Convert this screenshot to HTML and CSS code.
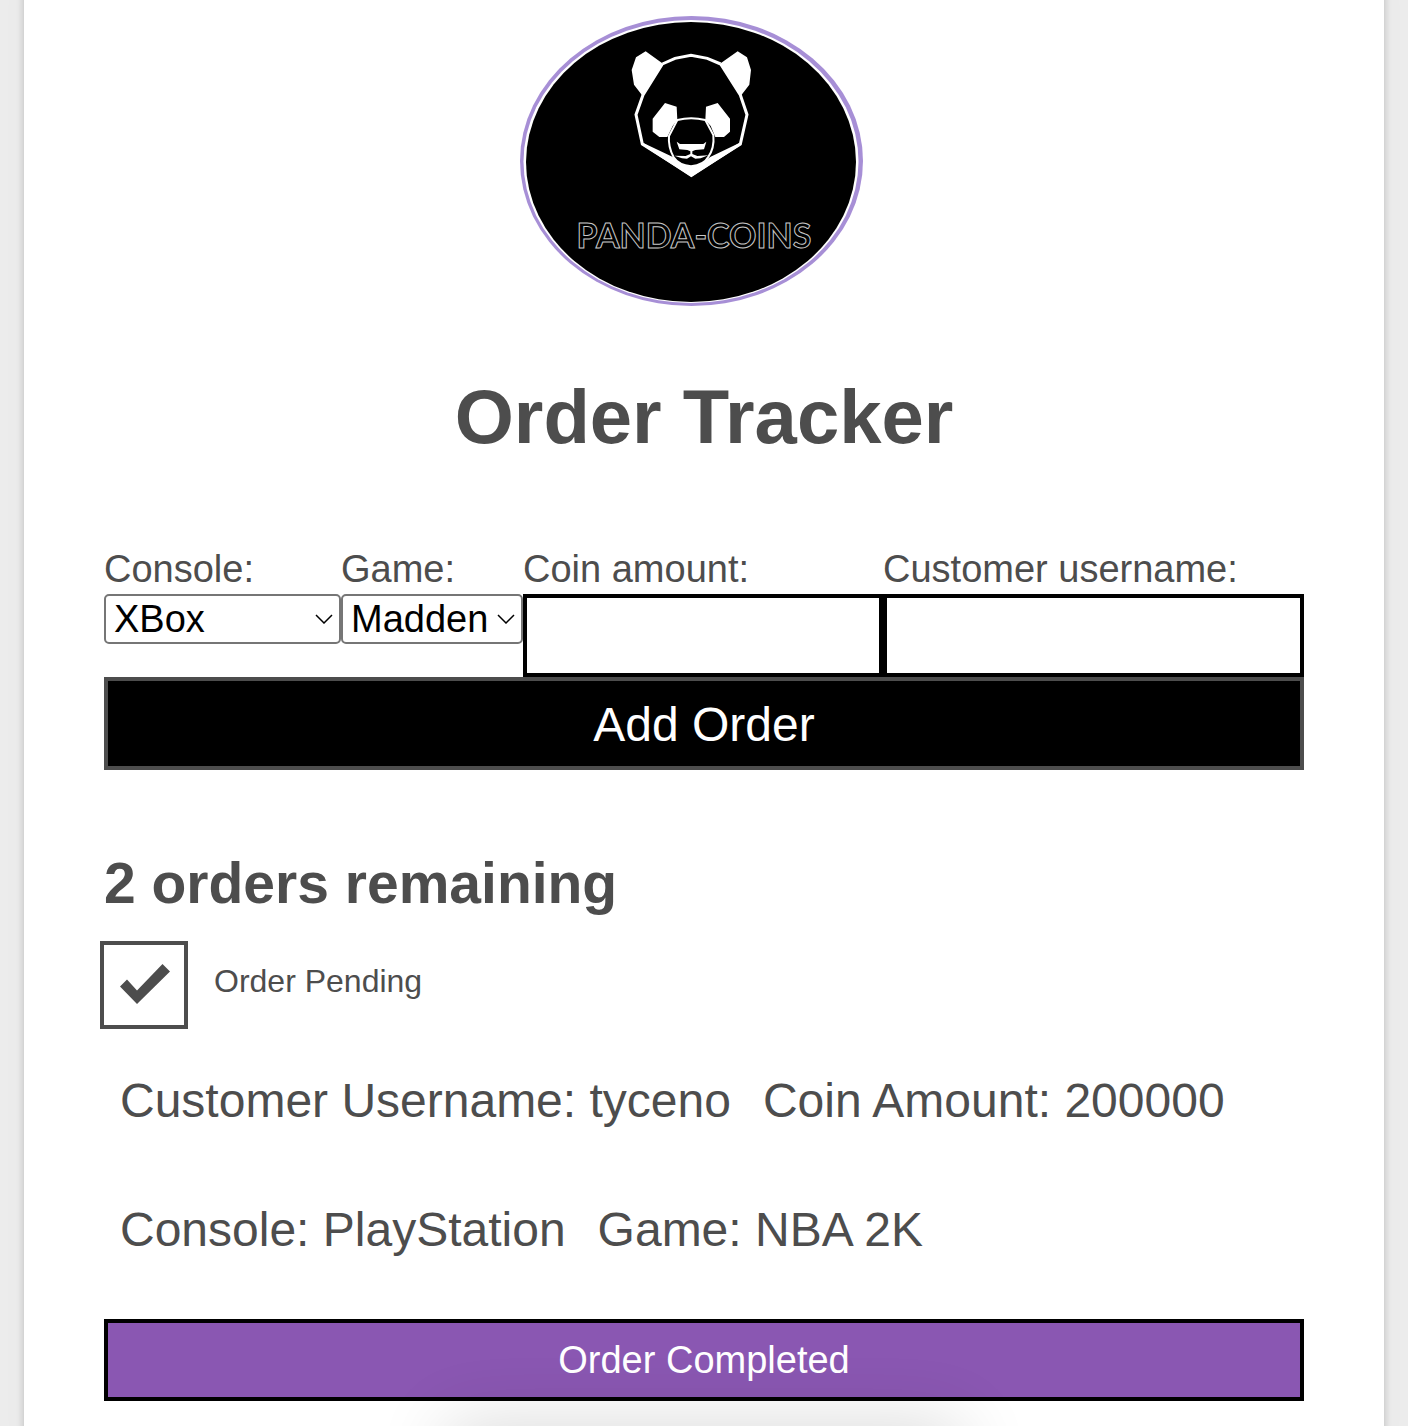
FILE: index.html
```html
<!DOCTYPE html>
<html lang="en">
<head>
<meta charset="utf-8">
<meta name="viewport" content="width=device-width, initial-scale=1">
<title>Order Tracker</title>
<link rel="stylesheet" href="styles.css">
</head>
<body>
<div class="page">
  <main class="card">
    <svg class="logo" viewBox="0 0 368 290" role="img" aria-label="Panda-Coins">
      <ellipse cx="171.5" cy="145" rx="171.5" ry="145" fill="#a78fd6"/>
      <ellipse cx="171" cy="145.5" rx="167.5" ry="141.5" fill="#fff"/>
      <ellipse cx="171" cy="146" rx="165" ry="140" fill="#000"/>
      <g transform="translate(100 24) scale(.33333)" fill="#fff">
        <path d="M77 34 127 70 68 168 42 134 35 90 48 52ZM353 34 302 70 362 168 388 134 393 90 381 52Z"/>
        <path d="M135 189 170 200 172 240 158 258 142 291 118 291 98 275 98 236ZM293 189 258 200 256 240 272 258 286 291 312 291 330 275 330 236Z"/>
        <path d="M127 72 165 55 213 46 262 55 302 72M127 72 69 165 48 224 67 312 214 405 361 312 381 224 361 165 302 72" fill="none" stroke="#fff" stroke-width="9"/>
        <path d="M65 314 70 309 157 350 188 374 213 379 238 374 272 350 358 309 364 314 214 412Z"/>
        <path d="M172 240Q213 230 256 240L280 285Q284 325 264 352 252 375 213 379 176 375 161 352 144 320 147 288Z" fill="#000" stroke="#fff" stroke-width="6"/>
        <path d="M170 305 180 312H250L259 305 252 328 226 330 217 334V342L232 348 265 346 242 355 226 356 213 349 201 356 186 355 163 347 197 348 211 342V334L202 330 178 328Z"/>
      </g>
      <text class="logo-name" x="174" y="232" text-anchor="middle">PANDA-COINS</text>
    </svg>

    <h1 class="title">Order Tracker</h1>

    <form class="order-form">
      <div class="field">
        <label for="console">Console:</label>
        <div class="picker">
          <select id="console"><option>XBox</option><option>PlayStation</option></select>
          <svg class="chevron" viewBox="0 0 18 10" aria-hidden="true"><path d="M1 1 9 9 17 1"/></svg>
        </div>
      </div>
      <div class="field">
        <label for="game">Game:</label>
        <div class="picker">
          <select id="game"><option>Madden</option><option>NBA 2K</option></select>
          <svg class="chevron" viewBox="0 0 18 10" aria-hidden="true"><path d="M1 1 9 9 17 1"/></svg>
        </div>
      </div>
      <div class="field">
        <label for="coins">Coin amount:</label>
        <input class="text-input" id="coins" type="text">
      </div>
      <div class="field">
        <label for="username">Customer username:</label>
        <input class="text-input" id="username" type="text">
      </div>
      <button class="add-button" type="submit">Add Order</button>
    </form>

    <h2 class="remaining">2 orders remaining</h2>

    <section class="order">
      <div class="status">
        <div class="tick">
          <input id="pending" type="checkbox" checked>
          <svg class="tick-mark" viewBox="0 0 88 88" aria-hidden="true"><path d="M20 45.500 27 38.500 37 49.500 62.500 23 70 30.500 37 63Z"/></svg>
        </div>
        <label for="pending">Order Pending</label>
      </div>
      <div class="details">
        <p>Customer Username: tyceno</p>
        <p>Coin Amount: 200000</p>
      </div>
      <div class="details">
        <p>Console: PlayStation</p>
        <p>Game: NBA 2K</p>
      </div>
      <button class="done-button" type="button">Order Completed</button>
    </section>
  </main>
  <div class="dock-shadow"></div>
</div>
</body>
</html>
```

FILE: styles.css
```css
*,
*::before {
  box-sizing: border-box;
}

body {
  margin: 0;
  background: #f0f0f0;
  color: #4d4d4d;
  font-family: "Liberation Sans", Arial, sans-serif;
}

.page {
  position: relative;
  display: flex;
  min-height: 100vh;
  overflow: clip;
}

/* The card runs past both ends of the page so its shadow stays even at the sides. */
.card {
  flex: 1;
  display: flex;
  flex-direction: column;
  margin: -100px 24px;
  padding: 116px 80px 120px;
  background: #fff;
  box-shadow: 0 4px 8px rgba(0, 0, 0, .2), 0 0 100px rgba(0, 0, 0, .05);
}

.logo {
  align-self: center;
  width: 368px;
  height: 290px;
}

.logo-name {
  font: 700 34px Lato, sans-serif;
  fill: #000;
  stroke: #c8c8c8;
  stroke-width: 1;
}

.title {
  margin: 67px 0 0;
  font-size: 76px;
  line-height: 88px;
  text-align: center;
}

.order-form {
  display: grid;
  grid-template-columns: 237fr 182fr 360fr 421fr;
  margin-top: 85px;
}

.field {
  display: flex;
  flex-direction: column;
  gap: 2px;
  min-width: 0;
  font-size: 38px;
  line-height: 46px;
}

.field label {
  white-space: nowrap;
}

.picker {
  display: grid;
  align-items: center;
}

.picker select {
  grid-area: 1 / 1;
  appearance: none;
  width: 100%;
  height: 50px;
  padding: 0 8px;
  border: 2px solid #767676;
  border-radius: 5px;
  background: #fff;
  color: #000;
  font: inherit;
}

.chevron {
  grid-area: 1 / 1;
  justify-self: end;
  width: 18px;
  height: 10px;
  margin-right: 8px;
  fill: none;
  stroke: #000;
  stroke-width: 1.5;
  pointer-events: none;
}

.text-input {
  width: 100%;
  height: 83px;
  padding: 0 16px;
  border: 4px solid #000;
  border-radius: 0;
  background: #fff;
  font: inherit;
}

.add-button,
.done-button {
  padding: 0;
  border: 4px solid #4d4d4d;
  color: #fff;
  font-family: inherit;
}

.add-button {
  grid-column: 1 / -1;
  height: 93px;
  padding-top: 2px;
  background: #000;
  font-size: 48px;
}

.remaining {
  margin: 79px 0 0;
  font-size: 57px;
  line-height: 68px;
}

.order {
  display: flex;
  flex-direction: column;
  margin-top: 24px;
}

.status {
  display: flex;
  align-items: center;
  gap: 26px;
  margin-left: -4px;
  font-size: 32px;
}

.status label {
  padding-bottom: 8px;
}

.tick {
  display: grid;
}

.tick input {
  grid-area: 1 / 1;
  appearance: none;
  width: 88px;
  height: 88px;
  margin: 0;
  border: 4px solid #4d4d4d;
}

.tick-mark {
  grid-area: 1 / 1;
  width: 88px;
  height: 88px;
  fill: #4d4d4d;
  pointer-events: none;
}

.tick input:not(:checked) + .tick-mark {
  visibility: hidden;
}

.details {
  display: flex;
  flex-wrap: wrap;
  gap: 0 32px;
  margin: 24px 0 9px;
  padding: 8px 16px;
  font-size: 48px;
  line-height: 80px;
}

.details p {
  margin: 0;
}

.done-button {
  height: 82px;
  margin-top: 32px;
  border-color: #000;
  background: #8a57b2;
  font-size: 38px;
}

/* Soft shade rising over the lower edge of the page. */
.dock-shadow {
  position: absolute;
  bottom: -56px;
  left: 50%;
  width: 480px;
  height: 40px;
  transform: translateX(-50%);
  box-shadow: 0 0 72px 16px rgba(0, 0, 0, .16);
  pointer-events: none;
}
```
